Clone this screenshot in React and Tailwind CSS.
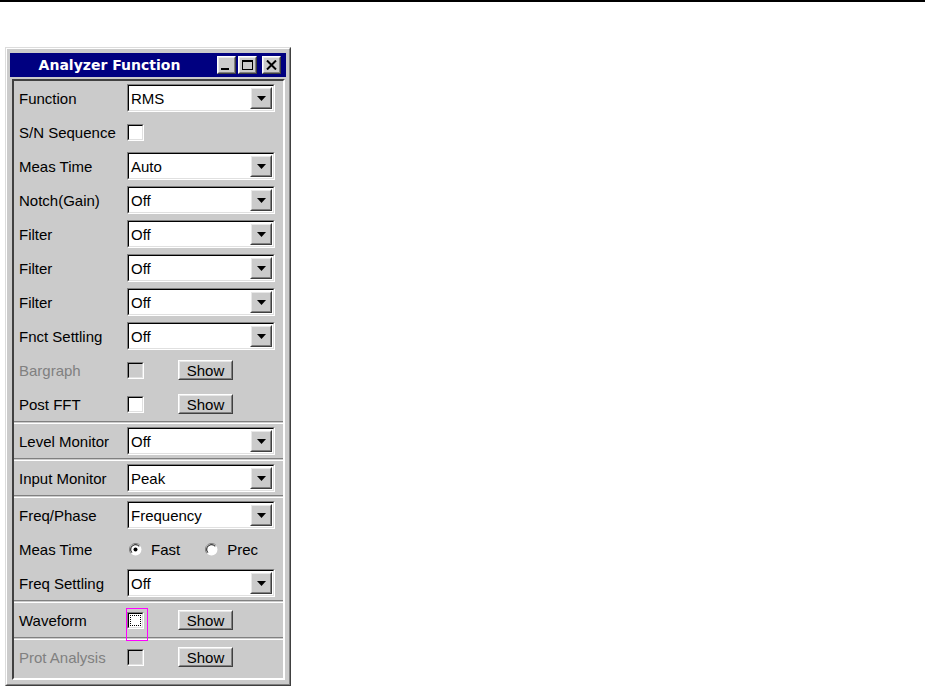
import React from 'react';

const FONT = { fontFamily: '"Liberation Sans", Arial, sans-serif' };

// raised 3D edge (buttons, window frame)
const Raised = ({ className = '', children }) => (
  <div className={`border border-t-white border-l-white border-r-[#404040] border-b-[#404040] ${className}`}>
    <div className="h-full w-full border border-t-[#e8e8e8] border-l-[#e8e8e8] border-r-[#808080] border-b-[#808080] flex items-center justify-center">
      {children}
    </div>
  </div>
);

const Arrow = () => (
  <svg width="9" height="5" viewBox="0 0 9 5">
    <path d="M0 0h9L4.5 5z" fill="#000" />
  </svg>
);

const Dropdown = ({ value }) => (
  <div className="w-[148px] h-[28px] border border-t-[#808080] border-l-[#808080] border-r-white border-b-white">
    <div className="h-full w-full border border-t-black border-l-black border-r-[#e0e0e0] border-b-[#e0e0e0] bg-white flex items-center">
      <span className="flex-1 pl-[2px] text-[15px] text-black leading-none">{value}</span>
      <Raised className="w-[22px] h-[22px] mr-[1px] bg-[#cbcbcb]">
        <Arrow />
      </Raised>
    </div>
  </div>
);

const Checkbox = ({ disabled, focus }) => (
  <div className="relative w-[17px] h-[17px] border border-t-[#808080] border-l-[#808080] border-r-white border-b-white">
    <div className={`h-full w-full border border-t-black border-l-black border-r-[#e0e0e0] border-b-[#e0e0e0] ${disabled ? 'bg-[#cbcbcb]' : 'bg-white'}`}>
      {focus && <div className="m-[1px] h-[11px] w-[11px] border border-dotted border-black" />}
    </div>
    {/* focus rectangle */}
    {focus && <span className="absolute -left-[2px] -top-[5px] w-[22px] h-[33px] border border-[#ff00ff]" />}
  </div>
);

const ShowButton = () => (
  <Raised className="w-[55px] h-[20px] bg-[#cbcbcb]">
    <span className="text-[15px] text-black leading-none">Show</span>
  </Raised>
);

const Radio = ({ checked, label }) => (
  <div className="flex items-center gap-[9px]">
    <svg width="13" height="13" viewBox="0 0 13 13">
      <circle cx="6.5" cy="6.5" r="6" fill="#fff" />
      <path d="M11.2 2.6A6 6 0 0 0 1.8 10.4" stroke="#808080" strokeWidth="1" fill="none" />
      <path d="M10.2 3.4A4.8 4.8 0 0 0 2.8 9.6" stroke="#000" strokeWidth="1" fill="none" />
      {checked && <circle cx="6.5" cy="6.5" r="2" fill="#000" />}
    </svg>
    <span className="text-[15px] text-black leading-none">{label}</span>
  </div>
);

const Row = ({ label, disabled, children }) => (
  <div className="h-[34px] flex items-center">
    <div className={`w-[113px] pl-[5px] text-[15px] leading-none ${disabled ? 'text-[#808080]' : 'text-black'}`}>
      {label}
    </div>
    {children}
  </div>
);

const CheckRow = ({ label, disabled, focus }) => (
  <Row label={label} disabled={disabled}>
    <div className="w-[51px]">
      <Checkbox disabled={disabled} focus={focus} />
    </div>
    <ShowButton />
  </Row>
);

const Sep = () => <div className="h-[3px] border-t border-t-[#808080] border-b border-b-white" />;

export default function App() {
  return (
    <div className="w-[925px] h-[690px] bg-white overflow-hidden" style={FONT}>
      <div className="h-[2px] bg-black" />

      <div className="ml-[5px] mt-[45px] w-[286px] border border-t-[#dcdcdc] border-l-[#dcdcdc] border-r-[#404040] border-b-[#404040]">
        <div className="border border-t-white border-l-white border-r-[#808080] border-b-[#808080] bg-[#cbcbcb] pl-[3px] pr-[3px] pt-[4px] pb-[4px]">
          {/* title bar */}
          <div className="h-[24px] bg-[#000080] flex items-center pr-[5px]">
            <div
              className="flex-1 text-center text-white font-bold text-[14px] leading-none pr-[8px]"
              style={{ fontFamily: '"DejaVu Sans", Tahoma, sans-serif' }}
            >
              Analyzer Function
            </div>
            <div className="flex gap-[2px]">
              <Raised className="w-[19px] h-[18px] bg-[#cbcbcb]">
                <div className="w-[8px] h-[2px] bg-black mt-[8px] -ml-[3px]" />
              </Raised>
              <Raised className="w-[19px] h-[18px] bg-[#cbcbcb]">
                <div className="w-[11px] h-[10px] border border-black border-t-2" />
              </Raised>
              <Raised className="w-[19px] h-[18px] bg-[#cbcbcb] ml-[3px]">
                <svg width="11" height="10" viewBox="0 0 11 10">
                  <path d="M1 0.5l9 9M10 0.5l-9 9" stroke="#000" strokeWidth="2" />
                </svg>
              </Raised>
            </div>
          </div>

          {/* contents */}
          <div className="mt-[2px] ml-[2px] mr-[1px] border-2 border-t-[#404040] border-l-[#404040] border-r-white border-b-white pb-[4px]">
            <Row label="Function"><Dropdown value="RMS" /></Row>
            <Row label="S/N Sequence"><Checkbox /></Row>
            <Row label="Meas Time"><Dropdown value="Auto" /></Row>
            <Row label="Notch(Gain)"><Dropdown value="Off" /></Row>
            <Row label="Filter"><Dropdown value="Off" /></Row>
            <Row label="Filter"><Dropdown value="Off" /></Row>
            <Row label="Filter"><Dropdown value="Off" /></Row>
            <Row label="Fnct Settling"><Dropdown value="Off" /></Row>
            <CheckRow label="Bargraph" disabled />
            <CheckRow label="Post FFT" />
            <Sep />
            <Row label="Level Monitor"><Dropdown value="Off" /></Row>
            <Sep />
            <Row label="Input Monitor"><Dropdown value="Peak" /></Row>
            <Sep />
            <Row label="Freq/Phase"><Dropdown value="Frequency" /></Row>
            <Row label="Meas Time">
              <div className="flex items-center gap-[25px] pl-[2px]">
                <Radio checked label="Fast" />
                <Radio label="Prec" />
              </div>
            </Row>
            <Row label="Freq Settling"><Dropdown value="Off" /></Row>
            <Sep />
            <CheckRow label="Waveform" focus />
            <Sep />
            <CheckRow label="Prot Analysis" disabled />
          </div>
        </div>
      </div>
    </div>
  );
}
